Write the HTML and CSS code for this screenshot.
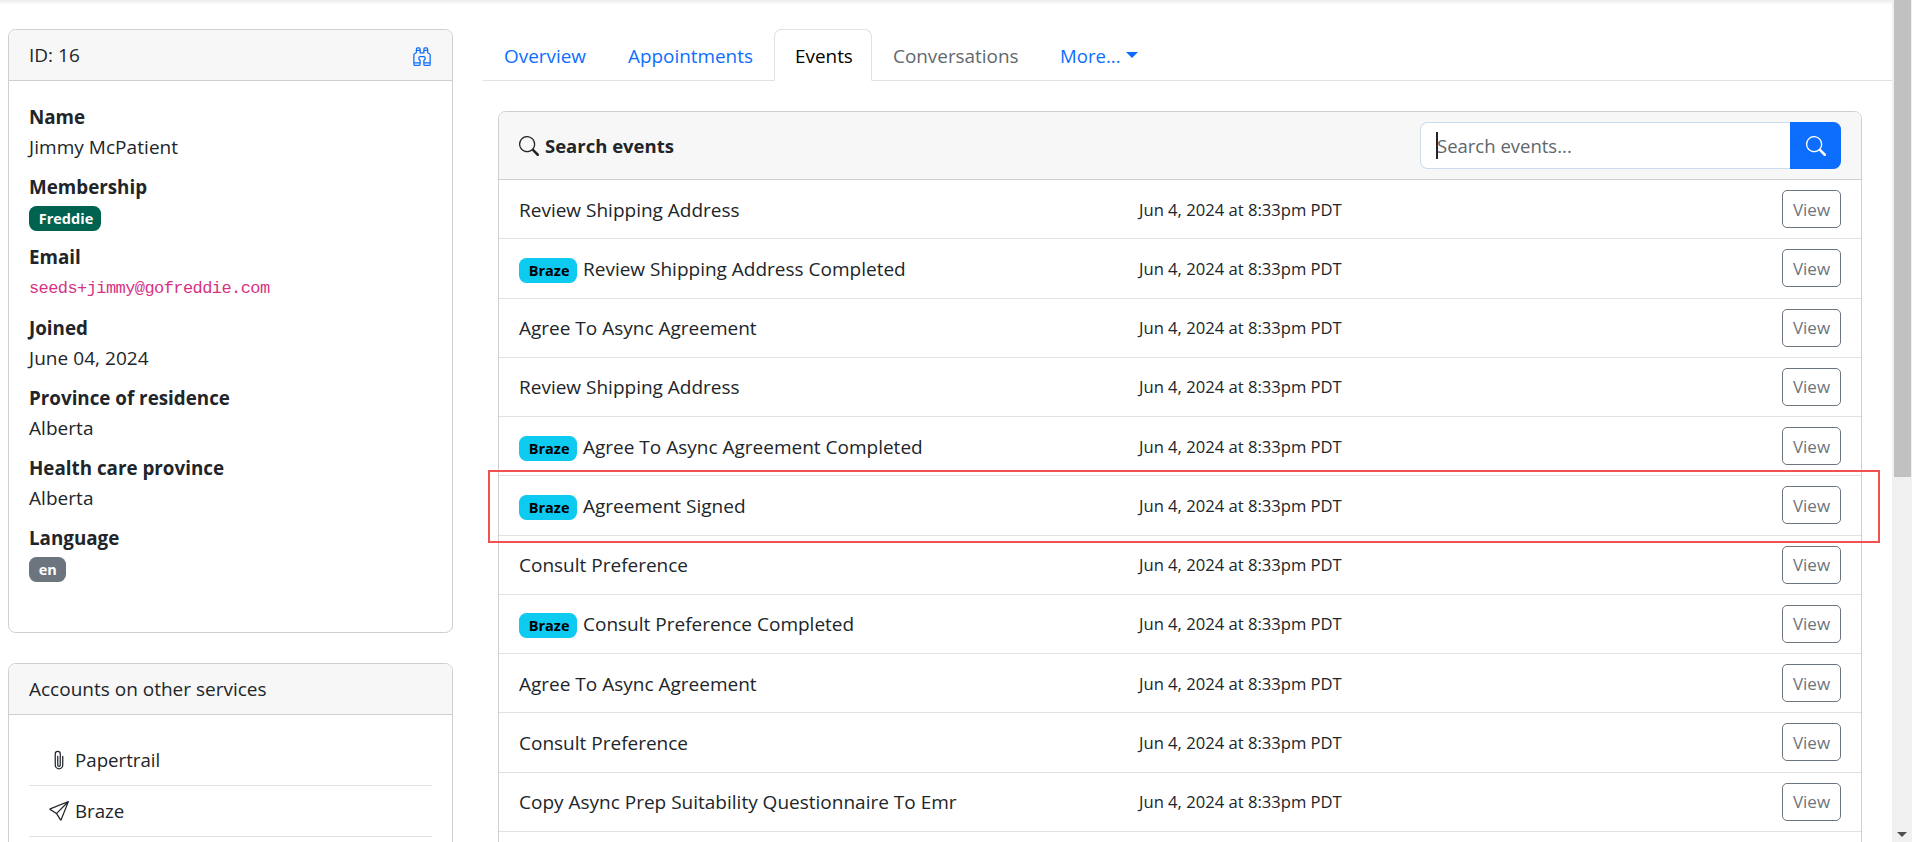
FILE: index.html
```html
<!DOCTYPE html>
<html lang="en">
<head>
<meta charset="utf-8">
<title>Patient events</title>
<link rel="stylesheet" href="styles.css">
</head>
<body>
<svg class="sprite" aria-hidden="true">
  <symbol id="search" viewBox="0 0 16 16"><path d="M11.742 10.344a6.5 6.5 0 1 0-1.397 1.398h-.001c.03.04.062.078.098.115l3.85 3.85a1 1 0 0 0 1.415-1.414l-3.85-3.85a1.007 1.007 0 0 0-.115-.1zM12 6.5a5.5 5.5 0 1 1-11 0 5.5 5.5 0 0 1 11 0z"/></symbol>
  <symbol id="paperclip" viewBox="0 0 16 16"><path d="M4.5 3a2.5 2.5 0 0 1 5 0v9a1.5 1.5 0 0 1-3 0V5a.5.5 0 0 1 1 0v7a.5.5 0 0 0 1 0V3a1.5 1.5 0 1 0-3 0v9a2.5 2.5 0 0 0 5 0V5a.5.5 0 0 1 1 0v7a3.5 3.5 0 1 1-7 0V3z"/></symbol>
  <symbol id="send" viewBox="0 0 16 16"><path d="M15.854.146a.5.5 0 0 1 .11.54l-5.819 14.547a.75.75 0 0 1-1.329.124l-3.178-4.995L.643 7.184a.75.75 0 0 1 .124-1.33L15.314.037a.5.5 0 0 1 .54.11ZM6.636 10.07l2.761 4.338L14.13 2.576 6.636 10.07Zm6.787-8.201L1.591 6.602l4.339 2.76 7.494-7.493Z"/></symbol>
  <symbol id="binoculars" viewBox="0 0 16 16"><path d="M3 2.5A1.5 1.5 0 0 1 4.5 1h1A1.5 1.5 0 0 1 7 2.5V5h2V2.5A1.5 1.5 0 0 1 10.5 1h1A1.5 1.5 0 0 1 13 2.5v2.382a.5.5 0 0 0 .276.447l.895.447A1.5 1.5 0 0 1 15 7.118V14.5a1.5 1.5 0 0 1-1.5 1.5h-3A1.5 1.5 0 0 1 9 14.5v-3a.5.5 0 0 1 .146-.354l.854-.853V9.5a.5.5 0 0 0-.5-.5h-3a.5.5 0 0 0-.5.5v.793l.854.853A.5.5 0 0 1 7 11.5v3A1.5 1.5 0 0 1 5.5 16h-3A1.5 1.5 0 0 1 1 14.5V7.118a1.5 1.5 0 0 1 .83-1.342l.894-.447A.5.5 0 0 0 3 4.882V2.5zM4.5 2a.5.5 0 0 0-.5.5V3h2v-.5a.5.5 0 0 0-.5-.5h-1zM6 4H4v.882a1.5 1.5 0 0 1-.83 1.342l-.894.447A.5.5 0 0 0 2 7.118V13h4v-1.293l-.854-.853A.5.5 0 0 1 5 10.5v-1A1.5 1.5 0 0 1 6.5 8h3A1.5 1.5 0 0 1 11 9.5v1a.5.5 0 0 1-.146.354l-.854.853V13h4V7.118a.5.5 0 0 0-.276-.447l-.895-.447A1.5 1.5 0 0 1 12 4.882V4h-2v1.5a.5.5 0 0 1-.5.5h-3a.5.5 0 0 1-.5-.5V4zm4-1h2v-.5a.5.5 0 0 0-.5-.5h-1a.5.5 0 0 0-.5.5V3zm4 11h-4v.5a.5.5 0 0 0 .5.5h3a.5.5 0 0 0 .5-.5V14zm-8 0H2v.5a.5.5 0 0 0 .5.5h3a.5.5 0 0 0 .5-.5V14z"/></symbol>
</svg>
<div class="topbar-shadow"></div>
<div class="page">
  <aside class="sidebar">
    <section class="card">
      <header class="card-header"><span>ID: 16</span><svg class="icon link"><use href="#binoculars"/></svg></header>
      <dl class="details">
        <div><dt>Name</dt><dd>Jimmy McPatient</dd></div>
        <div><dt>Membership</dt><dd><span class="badge green">Freddie</span></dd></div>
        <div><dt>Email</dt><dd class="email"><code>seeds+jimmy@gofreddie.com</code></dd></div>
        <div><dt>Joined</dt><dd>June 04, 2024</dd></div>
        <div><dt>Province of residence</dt><dd>Alberta</dd></div>
        <div><dt>Health care province</dt><dd>Alberta</dd></div>
        <div><dt>Language</dt><dd><span class="badge gray">en</span></dd></div>
      </dl>
    </section>
    <section class="card">
      <header class="card-header"><span>Accounts on other services</span></header>
      <ul class="services">
        <li><svg class="icon"><use href="#paperclip"/></svg>Papertrail</li>
        <li><svg class="icon"><use href="#send"/></svg>Braze</li>
      </ul>
    </section>
  </aside>
  <main class="main">
    <nav class="tabs">
      <a class="tab t1">Overview</a>
      <a class="tab t2">Appointments</a>
      <a class="tab t3 active">Events</a>
      <a class="tab t4 disabled">Conversations</a>
      <a class="tab t5"><span>More...</span><i class="caret"></i></a>
    </nav>
    <section class="card events">
      <header class="events-header">
        <h2><svg class="icon"><use href="#search"/></svg>Search events</h2>
        <div class="search"><div class="field"><i class="cursor"></i>Search events...</div><button class="go"><svg class="icon"><use href="#search"/></svg></button></div>
      </header>
      <div class="row"><div class="name">Review Shipping Address</div><time>Jun 4, 2024 at 8:33pm PDT</time><button class="view">View</button></div>
      <div class="row"><div class="name"><span class="badge cyan">Braze</span>Review Shipping Address Completed</div><time>Jun 4, 2024 at 8:33pm PDT</time><button class="view">View</button></div>
      <div class="row"><div class="name">Agree To Async Agreement</div><time>Jun 4, 2024 at 8:33pm PDT</time><button class="view">View</button></div>
      <div class="row"><div class="name">Review Shipping Address</div><time>Jun 4, 2024 at 8:33pm PDT</time><button class="view">View</button></div>
      <div class="row"><div class="name"><span class="badge cyan">Braze</span>Agree To Async Agreement Completed</div><time>Jun 4, 2024 at 8:33pm PDT</time><button class="view">View</button></div>
      <div class="row"><div class="highlight"></div><div class="name"><span class="badge cyan">Braze</span>Agreement Signed</div><time>Jun 4, 2024 at 8:33pm PDT</time><button class="view">View</button></div>
      <div class="row"><div class="name">Consult Preference</div><time>Jun 4, 2024 at 8:33pm PDT</time><button class="view">View</button></div>
      <div class="row"><div class="name"><span class="badge cyan">Braze</span>Consult Preference Completed</div><time>Jun 4, 2024 at 8:33pm PDT</time><button class="view">View</button></div>
      <div class="row"><div class="name">Agree To Async Agreement</div><time>Jun 4, 2024 at 8:33pm PDT</time><button class="view">View</button></div>
      <div class="row"><div class="name">Consult Preference</div><time>Jun 4, 2024 at 8:33pm PDT</time><button class="view">View</button></div>
      <div class="row"><div class="name">Copy Async Prep Suitability Questionnaire To Emr</div><time>Jun 4, 2024 at 8:33pm PDT</time><button class="view">View</button></div>
      <div class="row"><div class="name"></div><time></time><button class="view"></button></div>
    </section>
  </main>
  <div class="scrollbar"><div class="thumb"></div><i class="down"></i></div>
</div>
</body>
</html>
```
FILE: styles.css
```css
* { box-sizing: border-box; }
body {
  margin: 0;
  height: 842px;
  overflow: hidden;
  background: #fff;
  color: #212529;
  font: 19px/30px "Open Sans", "Noto Sans", sans-serif;
}
.sprite { position: absolute; width: 0; height: 0; }
.icon { width: 20px; height: 20px; fill: currentColor; flex: none; display: block; }
.topbar-shadow {
  position: absolute;
  inset: 0 20px auto 0;
  height: 5px;
  background: linear-gradient(#ededed, #fff);
}
.page { display: flex; height: 842px; overflow: hidden; }
.sidebar { width: 445px; margin: 29px 30px 0 8px; flex: none; display: flex; flex-direction: column; gap: 30px; }
.card { border: 1px solid #cfcfcf; border-radius: 7.5px; flex: none; }
.card-header {
  display: flex;
  align-items: center;
  justify-content: space-between;
  height: 51px;
  padding: 0 20px;
  background: #f7f7f7;
  border-bottom: 1px solid #cfcfcf;
  border-radius: 7px 7px 0 0;
}
.link { color: #0d6efd; margin-top: 1px; }
.details { margin: 0; padding: 21px 20px 0; height: 551px; }
.details div { height: 70.2px; }
dt { font-size: 18.8px; font-weight: 700; height: 30px; }
dd { margin: 0; height: 30px; display: flex; align-items: center; letter-spacing: 0.05px; }
code { font: 17px/30px "Liberation Mono", monospace; letter-spacing: -0.58px; color: #d63384; }
.email { padding-top: 4px; }
.badge {
  display: inline-block;
  height: 25px;
  padding: 0 9.75px;
  border-radius: 7.5px;
  font-size: 14.5px;
  font-weight: 700;
  line-height: 26px;
  letter-spacing: 0;
  color: #fff;
}
.green { background: #006350; width: 72px; margin-top: 3px; }
.gray { background: #6c757d; width: 37px; margin-top: 3px; }
.cyan { background: #0dcaf0; color: #000; width: 58px; margin: 3px 6px 0 0; }
.services { list-style: none; margin: 0; padding: 20px; }
.services li { display: flex; align-items: center; gap: 6px; height: 51px; padding: 0 20px; border-bottom: 1px solid #dee2e6; font-size: 18.7px; }
.main { width: 1410px; flex: none; padding-top: 29px; }
.tabs { display: flex; height: 52px; border-bottom: 1px solid #dee2e6; }
.tab { height: 52px; padding: 11px 20px 0; border: 1px solid transparent; color: #0d6efd; white-space: nowrap; line-height: 30px; font-size: 18.9px; }
.t1 { width: 124px; }
.t2 { width: 167px; }
.t3 { width: 98px; }
.t4 { width: 166px; }
.t5 { display: flex; gap: 5px; padding-left: 21px; font-size: 18.6px; }
.active { color: #000; background: #fff; border-color: #dee2e6 #dee2e6 #fff; border-radius: 7.5px 7.5px 0 0; }
.disabled { color: #62686d; }
.caret { width: 0; height: 0; border: 6px solid transparent; border-top-color: currentColor; border-bottom: 0; margin-top: 11px; }
.events { width: 1364px; margin: 30px 0 0 15px; }
.events-header {
  display: flex;
  align-items: center;
  justify-content: space-between;
  height: 68px;
  padding: 0 20px;
  background: #f7f7f7;
  border-bottom: 1px solid #cfcfcf;
  border-radius: 7px 7px 0 0;
}
h2 { display: flex; align-items: center; gap: 6px; margin: 0; font-size: 18.5px; line-height: 30px; font-weight: 700; }
.search { display: flex; width: 421px; height: 47px; }
.field { position: relative; flex: 1; padding: 0 16px; line-height: 45px; border: 1px solid #cbdcef; border-right: 0; border-radius: 7.5px 0 0 7.5px; background: #fff; color: #60666c; font-size: 18.5px; }
.cursor { position: absolute; left: 15px; top: 9px; width: 2px; height: 27px; background: #212529; }
.go { display: flex; align-items: center; justify-content: center; width: 51px; border: 0; border-radius: 0 7.5px 7.5px 0; background: #0d6efd; color: #fff; padding: 0; }
.row { position: relative; display: grid; grid-template-columns: 620px 1fr 59px; align-items: center; height: 59.25px; padding: 0 20px; border-bottom: 1px solid #dee2e6; }
.name { display: flex; align-items: center; white-space: nowrap; padding-top: 1px; }
time { font-size: 16.6px; padding-top: 1px; }
.view { width: 59px; height: 38px; border: 1px solid #6c757d; border-radius: 5px; background: #fff; color: #6c757d; font: 17px "Open Sans", sans-serif; padding: 0; }
.highlight { position: absolute; left: -11px; top: -6px; width: 1392px; height: 73px; border: 2px solid #f05050; }
.scrollbar { flex: none; width: 20px; margin-left: -1px; padding-left: 2px; background: #f0f0f0; height: 842px; display: flex; flex-direction: column; justify-content: space-between; }
.thumb { width: 17px; height: 477px; background: #c1c1c1; }
.down { width: 0; border: 5px solid transparent; border-top-color: #505050; border-bottom: 0; margin: 0 0 5px 3px; }
```
